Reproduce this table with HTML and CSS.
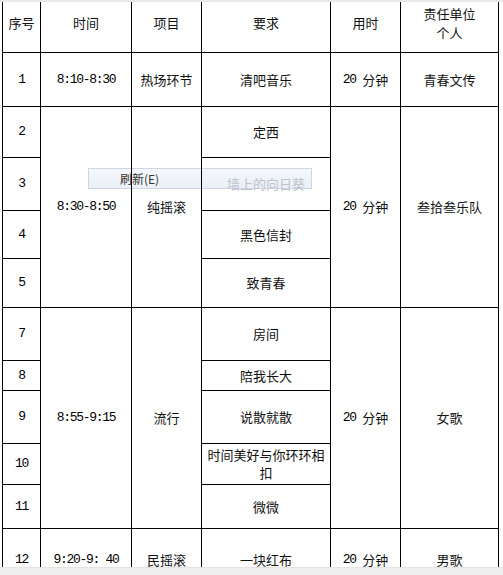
FILE: index.html
```html
<!DOCTYPE html>
<html lang="zh">
<head>
<meta charset="utf-8">
<title>节目单</title>
<link rel="stylesheet" href="styles.css">
</head>
<body>
<div class="topstrip"></div>
<div class="sheet">
  <div class="cell">序号</div>
  <div class="cell">时间</div>
  <div class="cell">项目</div>
  <div class="cell">要求</div>
  <div class="cell">用时</div>
  <div class="cell head2">责任单位<br>个人</div>

  <div class="cell"><span class="num">1</span></div>
  <div class="cell"><span class="num">8:10-8:30</span></div>
  <div class="cell">热场环节</div>
  <div class="cell">清吧音乐</div>
  <div class="cell"><span class="num">20 </span>分钟</div>
  <div class="cell">青春文传</div>

  <div class="cell"><span class="num">2</span></div>
  <div class="cell span4"><span class="num">8:30-8:50</span></div>
  <div class="cell span4">纯摇滚</div>
  <div class="cell">定西</div>
  <div class="cell span4"><span class="num">20 </span>分钟</div>
  <div class="cell span4">叁拾叁乐队</div>

  <div class="cell"><span class="num">3</span></div>
  <div class="cell faded">墙上的向日葵</div>

  <div class="cell"><span class="num">4</span></div>
  <div class="cell">黑色信封</div>

  <div class="cell"><span class="num">5</span></div>
  <div class="cell">致青春</div>

  <div class="cell"><span class="num">7</span></div>
  <div class="cell span5"><span class="num">8:55-9:15</span></div>
  <div class="cell span5">流行</div>
  <div class="cell">房间</div>
  <div class="cell span5"><span class="num">20 </span>分钟</div>
  <div class="cell span5">女歌</div>

  <div class="cell"><span class="num">8</span></div>
  <div class="cell">陪我长大</div>

  <div class="cell"><span class="num">9</span></div>
  <div class="cell">说散就散</div>

  <div class="cell"><span class="num">10</span></div>
  <div class="cell">时间美好与你环环相扣</div>

  <div class="cell"><span class="num">11</span></div>
  <div class="cell">微微</div>

  <div class="cell"><span class="num">12</span></div>
  <div class="cell"><span class="num">9:20-9: 40</span></div>
  <div class="cell">民摇滚</div>
  <div class="cell">一块红布</div>
  <div class="cell"><span class="num">20 </span>分钟</div>
  <div class="cell">男歌</div>
</div>
<div class="menu"><span class="menu-item">刷新(E)</span></div>
<div class="bottombar"></div>
</body>
</html>
```

FILE: styles.css
```css
html {
  margin: 0;
  padding: 0;
  background: #fff;
  overflow: hidden;
  height: 575px;
}

body {
  margin: 0;
  padding: 0;
  background: transparent;
  font-family: "Noto Sans CJK SC", "Noto Sans", sans-serif;
  font-size: 13px;
  color: #111;
}

.topstrip {
  position: fixed;
  top: 0;
  left: 0;
  right: 0;
  height: 2px;
  background: #e8e8e8;
  z-index: 2;
}

.sheet {
  display: grid;
  grid-template-columns: 38px 91px 70px 129px 70px 98px;
  grid-template-rows: 59px 54px 51px 53px 48px 49px 53px 30px 53px 41px 44px 62px;
  justify-content: start;
  margin: -6px 0 0 2px;
  border-left: 1px solid #000;
}

.cell {
  box-sizing: border-box;
  border-right: 1px solid #000;
  border-bottom: 1px solid #000;
  display: flex;
  align-items: center;
  justify-content: center;
  text-align: center;
  line-height: 18px;
  padding: 0;
}

.head2 {
  line-height: 19px;
}

.span4 {
  grid-row: span 4;
}

.span5 {
  grid-row: span 5;
}

.num {
  font-family: "Liberation Mono", monospace;
  letter-spacing: -1.3px;
  white-space: pre;
  color: #000;
}

.faded {
  color: #bcc3cd;
}

.menu {
  position: absolute;
  left: 88px;
  top: 168px;
  width: 222px;
  height: 19px;
  border: 1px solid #cdd6e2;
  background: linear-gradient(#f4f7fb, #ebf0f7);
  z-index: -1;
  display: flex;
  align-items: center;
}

.menu-item {
  margin-left: 31px;
  font-size: 12px;
  color: #333;
  line-height: 19px;
}

.bottombar {
  position: fixed;
  left: 0;
  right: 0;
  bottom: 0;
  height: 7px;
  background: #efefef;
  border-top: 1px solid #e4e4e4;
  z-index: 2;
}
```
